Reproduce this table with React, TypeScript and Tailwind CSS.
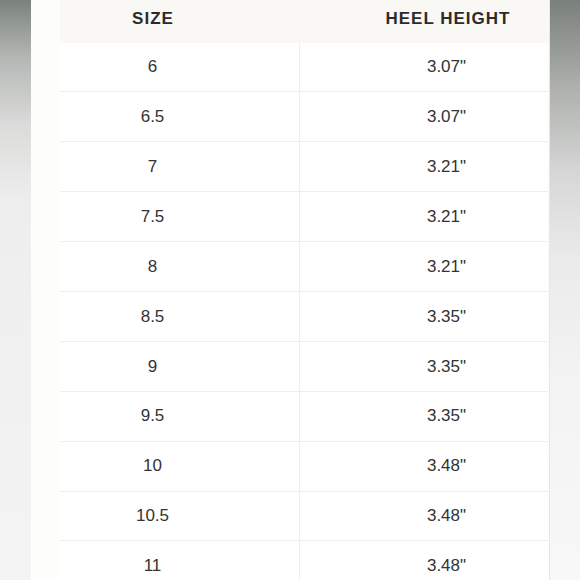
const rows: [string, string][] = [
  ["6", '3.07"'],
  ["6.5", '3.07"'],
  ["7", '3.21"'],
  ["7.5", '3.21"'],
  ["8", '3.21"'],
  ["8.5", '3.35"'],
  ["9", '3.35"'],
  ["9.5", '3.35"'],
  ["10", '3.48"'],
  ["10.5", '3.48"'],
  ["11", '3.48"'],
];

export default function App() {
  return (
    <div className="flex h-[580px] w-[580px] overflow-hidden bg-white font-['Liberation_Sans',Arial,sans-serif]">
      {/* left backdrop strip */}
      <div className="h-full w-[31px] shrink-0 bg-[linear-gradient(to_bottom,#7b827d_0%,#b4b8b5_10%,#dcdcdb_22%,#eeeeee_35%,#f4f4f4_100%)]" />

      <div className="h-full w-[518px] shrink-0 bg-[#fdfdfc] pl-[29px] pr-px">
        <div className="flex h-[42.5px] bg-[#faf8f4] pb-[5px] text-[17px] font-semibold tracking-[1px] text-[#2b2b2b]">
          <div className="flex w-[240px] items-center justify-center pr-[54px]">SIZE</div>
          <div className="flex flex-1 items-center justify-center pl-[48px]">HEEL HEIGHT</div>
        </div>
        {rows.map(([size, heel], i) => (
          <div
            key={i}
            className="flex h-[49.9px] border-b-[1.5px] border-[#f0eeea] bg-white text-[17px] text-[#333]"
          >
            <div className="flex w-[240px] items-center justify-center border-r border-[#f0efec] pr-[54px]">
              {size}
            </div>
            <div className="flex flex-1 items-center justify-center pl-[45px]">{heel}</div>
          </div>
        ))}
      </div>

      {/* right backdrop strip */}
      <div className="h-full flex-1 border-l border-[#e6e6e6] bg-[linear-gradient(to_bottom,#7a807c_0%,#adb0ad_15%,#d6d7d6_30%,#ebebeb_45%,#f3f3f3_65%,#f8f8f8_100%)]" />
    </div>
  );
}
